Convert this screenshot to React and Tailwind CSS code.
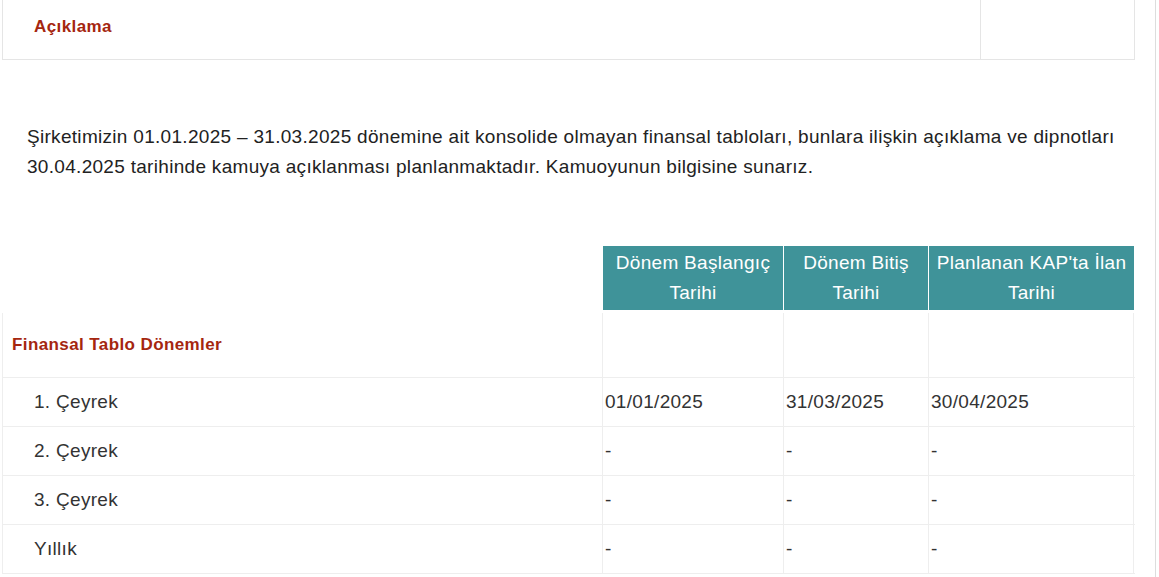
export default function App() {
  const rows = [
    ["1. Çeyrek", "01/01/2025", "31/03/2025", "30/04/2025"],
    ["2. Çeyrek", "-", "-", "-"],
    ["3. Çeyrek", "-", "-", "-"],
    ["Yıllık", "-", "-", "-"],
  ];
  const cols = "grid grid-cols-[600px_181px_145px_206px]";
  return (
    <div className="w-[1159px] h-[577px] bg-white overflow-hidden relative text-[#333]" style={{ fontFamily: '"Liberation Sans", Arial, sans-serif' }}>
      <div className="absolute right-[3px] top-0 h-full w-px bg-[#ddd]" />
      <div className="ml-[2px] w-[1133px] h-[60px] border border-t-0 border-[#e5e5e5] flex">
        <div className="flex-1 flex items-center pl-[31px] pb-[6px] text-[17px] tracking-[0.4px] font-bold text-[#a5260f] border-r border-[#e5e5e5]">Açıklama</div>
        <div className="w-[153px]" />
      </div>
      <p className="ml-[27px] mt-[62px] text-[19px] tracking-[0.3px] leading-[30px] text-[#222] w-[1110px]">
        Şirketimizin 01.01.2025 – 31.03.2025 dönemine ait konsolide olmayan finansal tabloları, bunlara ilişkin açıklama ve dipnotları 30.04.2025 tarihinde kamuya açıklanması planlanmaktadır. Kamuoyunun bilgisine sunarız.
      </p>
      <div className="ml-[2px] mt-[64px] w-[1133px]">
        <div className={cols + " h-[64px]"}>
          <div />
          {["Dönem Başlangıç Tarihi", "Dönem Bitiş Tarihi", "Planlanan KAP'ta İlan Tarihi"].map((h, i) => (
            <div key={i} className="bg-[#3f9399] text-white text-[19px] tracking-[0.3px] leading-[30px] text-center flex items-center justify-center px-1 border-l border-white">{h}</div>
          ))}
        </div>
        <div className={cols + " h-[68px] border-b border-t-[3px] border-t-white border-[#eee]"}>
          <div className="flex items-center pl-[9px] text-[17px] tracking-[0.4px] font-bold text-[#a5260f] border-l border-[#eee]">Finansal Tablo Dönemler</div>
          <div className="border-l border-[#eee]" />
          <div className="border-l border-[#eee]" />
          <div className="border-l border-r border-[#eee]" />
        </div>
        {rows.map((r, i) => (
          <div key={i} className={cols + " h-[49px] border-b border-[#eee] text-[19px] tracking-[0.3px]"}>
            <div className="flex items-center pl-[31px] border-l border-[#eee]">{r[0]}</div>
            <div className="flex items-center pl-[2px] border-l border-[#eee]">{r[1]}</div>
            <div className="flex items-center pl-[2px] border-l border-[#eee]">{r[2]}</div>
            <div className="flex items-center pl-[2px] border-l border-r border-[#eee]">{r[3]}</div>
          </div>
        ))}
      </div>
    </div>
  );
}
